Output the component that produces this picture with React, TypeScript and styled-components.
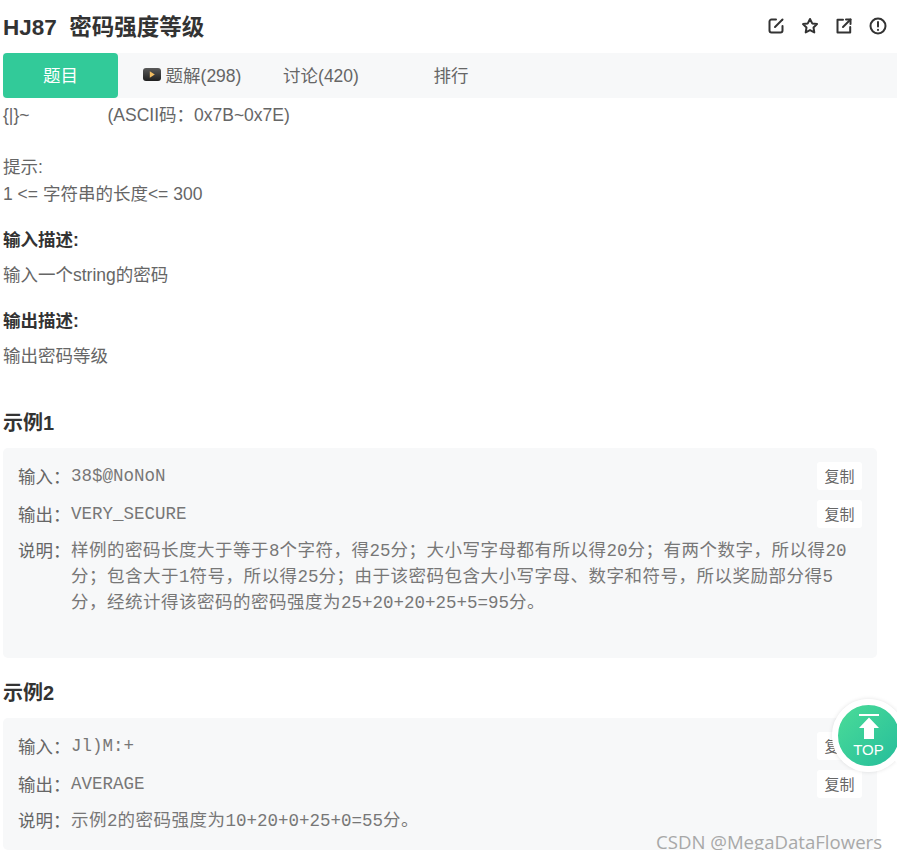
import React from 'react';
import styled, { createGlobalStyle } from 'styled-components';

const sans = `"Liberation Sans", "Noto Sans CJK SC", sans-serif`;
const mono = `"Liberation Mono", "Noto Sans CJK SC", monospace`;

const GlobalStyle = createGlobalStyle`
  html, body {
    margin: 0;
    padding: 0;
    background: #fff;
  }
`;

const Page = styled.div`
  position: relative;
  box-sizing: border-box;
  width: 897px;
  height: 850px;
  padding-left: 3px;
  overflow: hidden;
  font-family: ${sans};
  font-size: 17.5px;
  color: #666;
`;

const Header = styled.header`
  box-sizing: border-box;
  display: flex;
  align-items: center;
  justify-content: space-between;
  height: 53px;
  padding: 0 10px 4px 0;
`;

const Title = styled.h1`
  margin: 0;
  font-size: 22.5px;
  font-weight: 700;
  color: #333;
  white-space: pre;
`;

const Actions = styled.div`
  display: flex;
  gap: 16px;
  margin-top: 2px;
  color: #333;
`;

const TabBar = styled.nav`
  display: flex;
  align-items: stretch;
  height: 45px;
  background: #f7f8f9;
`;

const Tab = styled.div<{ $active?: boolean; $width: number }>`
  box-sizing: border-box;
  display: flex;
  align-items: center;
  justify-content: center;
  gap: 5px;
  width: ${p => p.$width}px;
  padding-bottom: 2px;
  border-radius: 4px;
  background: ${p => (p.$active ? '#32ca99' : 'transparent')};
  color: ${p => (p.$active ? '#fff' : '#666')};
`;

const Intro = styled.div`
  padding-top: 4px;
  line-height: 26.25px;
`;

const Gap = styled.span`
  display: inline-block;
  width: 78px;
`;

const Hint = styled.div`
  margin-top: 26px;
`;

const SectionLabel = styled.div`
  margin-top: 20px;
  font-weight: 700;
  color: #333;
  line-height: 26px;
`;

const SectionText = styled.div`
  margin-top: 9px;
  line-height: 26px;
`;

const ExampleTitle = styled.h2<{ $top: number }>`
  margin: ${p => p.$top}px 0 0;
  font-size: 20px;
  font-weight: 700;
  color: #333;
  line-height: 30px;
`;

const Card = styled.section<{ $height: number }>`
  box-sizing: border-box;
  width: 874px;
  height: ${p => p.$height}px;
  margin-top: 10px;
  padding: 14px 15px 0;
  border-radius: 5px;
  background: #f7f8f9;
`;

const Row = styled.div`
  display: flex;
  align-items: center;
  justify-content: space-between;
  height: 28px;
  margin-bottom: 10px;
`;

const Label = styled.span`
  flex: none;
  width: 53px;
`;

const Value = styled.span`
  flex: 1;
  font-family: ${mono};
  color: #777;
`;

const Note = styled.div`
  display: flex;
  line-height: 26.25px;
  margin-top: 1px;
`;

const NoteText = styled.div`
  flex: 1;
  font-family: ${mono};
  letter-spacing: 0.5px;
  color: #777;
  white-space: nowrap;
`;

const Ascii = styled.span`
  letter-spacing: 0;
`;

const CopyButton = styled.button`
  flex: none;
  width: 45px;
  height: 28px;
  padding: 0;
  border: 0;
  border-radius: 3px;
  background: #fff;
  font-family: ${sans};
  font-size: 15px;
  color: #666;
`;

const TopButton = styled.div`
  position: absolute;
  left: 832px;
  top: 699px;
  box-sizing: border-box;
  width: 73px;
  height: 73px;
  border: 6px solid #fff;
  border-radius: 50%;
  background: linear-gradient(135deg, #4bdc98, #25bd9b);
  box-shadow: 0 0 4px rgba(0, 0, 0, 0.12);
  color: #fff;
  font-size: 15px;
  text-align: center;
`;

const TopIcon = styled.svg`
  display: block;
  margin: 9px auto 0;
`;

const TopLabel = styled.div`
  margin-top: 2px;
  line-height: 18px;
`;

const Notch = styled.div`
  position: absolute;
  left: 894px;
  top: 753px;
  width: 10px;
  height: 10px;
  background: #fff;
  transform: rotate(45deg);
`;

const Watermark = styled.div`
  position: absolute;
  left: 656px;
  top: 830px;
  font-family: "Open Sans", sans-serif;
  font-size: 18.6px;
  line-height: 24px;
  color: #a8a8a8;
  white-space: nowrap;
`;

const Icon = ({ children }: { children: React.ReactNode }) => (
  <svg width="18" height="18" viewBox="0 0 18 18" fill="none" stroke="currentColor" strokeWidth="2" strokeLinecap="round" strokeLinejoin="round">
    {children}
  </svg>
);

const PlayIcon = () => (
  <svg width="18" height="13" viewBox="0 0 18 13">
    <defs>
      <linearGradient id="play-bg" x1="0" y1="0" x2="0" y2="1">
        <stop offset="0" stopColor="#5a5a5a" />
        <stop offset="1" stopColor="#1f1f1f" />
      </linearGradient>
    </defs>
    <rect width="18" height="13" rx="3" fill="url(#play-bg)" />
    <path d="M6.8 3.2 11.8 6.5l-5 3.3z" fill="#f2bd62" />
  </svg>
);

// CJK glyphs in the sample blocks run half a pixel wider than the latin ones
const spaced = (text: string) =>
  text.split(/([\x21-\x7e]+)/).map((part, i) => (i % 2 ? <Ascii key={i}>{part}</Ascii> : part));

type Example = {
  input: string;
  output: string;
  note: string[];
  height: number;
  titleTop: number;
  title: string;
};

const examples: Example[] = [
  {
    title: '示例1',
    titleTop: 39,
    height: 210,
    input: '38$@NoNoN',
    output: 'VERY_SECURE',
    note: [
      '样例的密码长度大于等于8个字符，得25分；大小写字母都有所以得20分；有两个数字，所以得20',
      '分；包含大于1符号，所以得25分；由于该密码包含大小写字母、数字和符号，所以奖励部分得5',
      '分，经统计得该密码的密码强度为25+20+20+25+5=95分。',
    ],
  },
  {
    title: '示例2',
    titleTop: 20,
    height: 132,
    input: 'Jl)M:+',
    output: 'AVERAGE',
    note: ['示例2的密码强度为10+20+0+25+0=55分。'],
  },
];

export default function App() {
  return (
    <Page>
      <GlobalStyle />
      <Header>
        <Title>HJ87  密码强度等级</Title>
        <Actions>
          <Icon>
            <path d="M9 2.5H4.5a2 2 0 0 0-2 2v9a2 2 0 0 0 2 2h9a2 2 0 0 0 2-2V9" />
            <path d="M15.5 2.5 8 10" />
          </Icon>
          <Icon>
            <path d="m9 2 2.2 4.4 4.8.7-3.5 3.4.8 4.9L9 13.1l-4.3 2.3.8-4.9L2 7.1l4.8-.7z" />
          </Icon>
          <Icon>
            <path d="M8 2.8H2.5v12.7h12.7V10" />
            <path d="M15.5 2.5 8 10" />
            <path d="M11 2.5h4.5V7" />
          </Icon>
          <Icon>
            <circle cx="9" cy="9" r="7.5" />
            <path d="M9 5v4.5" />
            <path d="M9 12.8v.2" />
          </Icon>
        </Actions>
      </Header>
      <TabBar>
        <Tab $active $width={115}>题目</Tab>
        <Tab $width={148}><PlayIcon />题解(298)</Tab>
        <Tab $width={110}>讨论(420)</Tab>
        <Tab $width={150}>排行</Tab>
      </TabBar>
      <Intro>
        {'{|}~'}<Gap />(ASCII码：0x7B~0x7E)
        <Hint>提示:<br />1 &lt;= 字符串的长度&lt;= 300</Hint>
      </Intro>
      <SectionLabel>输入描述:</SectionLabel>
      <SectionText>输入一个string的密码</SectionText>
      <SectionLabel>输出描述:</SectionLabel>
      <SectionText>输出密码等级</SectionText>
      {examples.map(example => (
        <React.Fragment key={example.title}>
          <ExampleTitle $top={example.titleTop}>{example.title}</ExampleTitle>
          <Card $height={example.height}>
            <Row>
              <Label>输入：</Label>
              <Value>{example.input}</Value>
              <CopyButton>复制</CopyButton>
            </Row>
            <Row>
              <Label>输出：</Label>
              <Value>{example.output}</Value>
              <CopyButton>复制</CopyButton>
            </Row>
            <Note>
              <Label>说明：</Label>
              <NoteText>
                {example.note.map(line => (
                  <div key={line}>{spaced(line)}</div>
                ))}
              </NoteText>
            </Note>
          </Card>
        </React.Fragment>
      ))}
      <TopButton>
        <TopIcon width="20" height="25" viewBox="0 0 20 25">
          <rect x="0" y="0" width="20" height="2" fill="#fff" />
          <path d="M10 3.5 20 14h-5v11H5V14H0z" fill="#fff" />
        </TopIcon>
        <TopLabel>TOP</TopLabel>
      </TopButton>
      <Notch />
      <Watermark>CSDN @MegaDataFlowers</Watermark>
    </Page>
  );
}
